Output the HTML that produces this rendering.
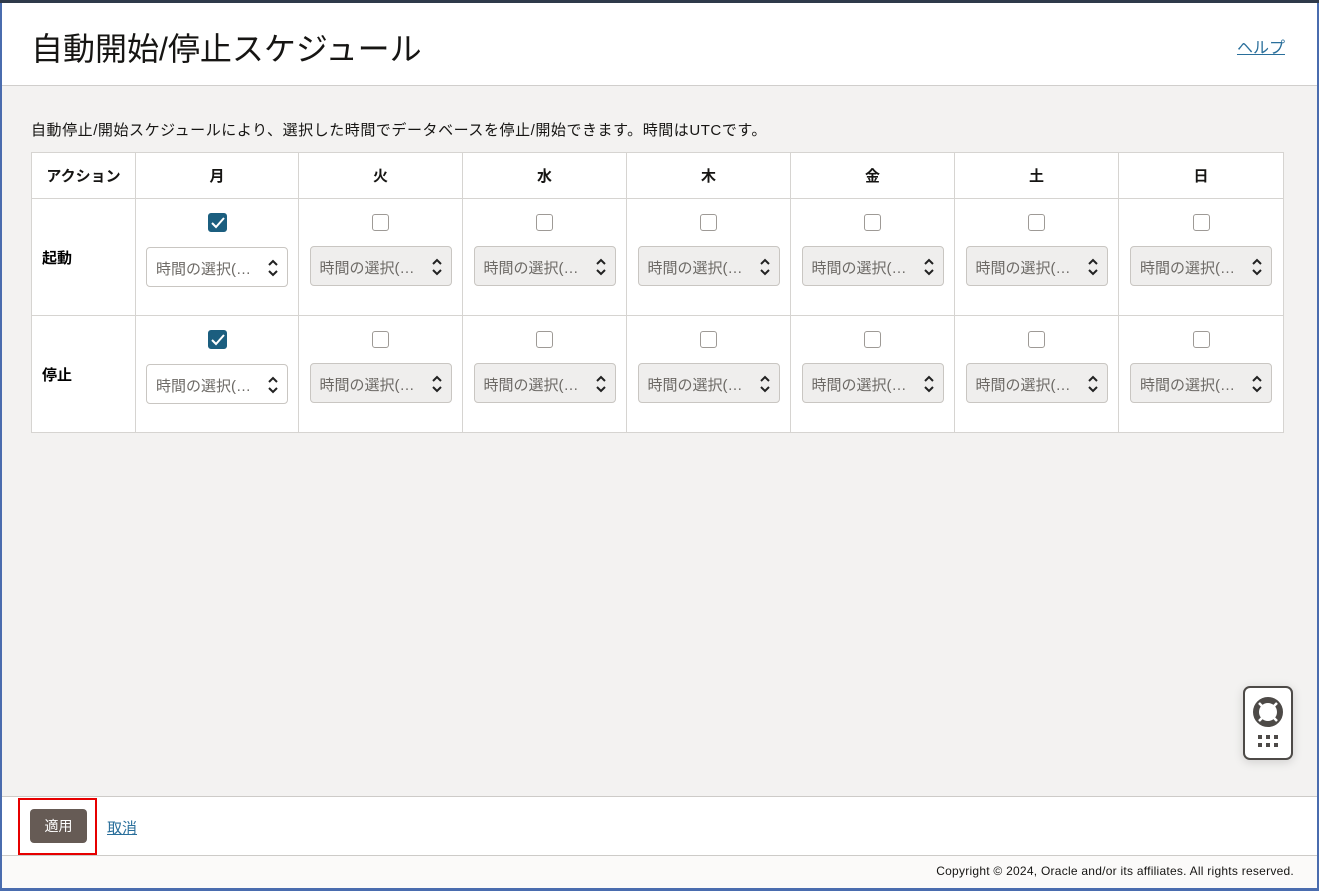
<!DOCTYPE html>
<html><head><meta charset="utf-8"><style>
*{box-sizing:border-box;margin:0;padding:0}
body{width:1319px;height:891px;background:#4a6cae;font-family:"Liberation Sans","Noto Sans CJK JP",sans-serif;position:relative;overflow:hidden}
.frame{position:absolute;left:2px;top:3px;width:1315px;height:885px;background:#fbfaf9}
.topline{position:absolute;left:0;top:0;width:1319px;height:3px;background:#2f3a4a}
.hdr{position:absolute;left:0;top:0;width:1315px;height:83px;background:#fff;border-bottom:1px solid #d0cecc}
.hdr h1{position:absolute;left:29px;top:21px;font-size:32px;font-weight:400;color:#161513}
.help{position:absolute;right:32px;top:31px;font-size:16px;color:#2a6f9b;text-decoration:underline}
.body{position:absolute;left:0;top:83px;width:1315px;height:710px;background:#f3f2f1}
.desc{position:absolute;left:29px;top:33px;font-size:15px;letter-spacing:0.55px;color:#161513}
table{position:absolute;left:29px;top:66px;border-collapse:collapse;background:#fff;border:1px solid #cfcdca}
td,th{border:1px solid #d6d4d1;text-align:center}
th{height:46px;font-size:15px;font-weight:700;color:#161513}
td{height:117px;vertical-align:top}
td.lbl{text-align:left;padding-left:10px;vertical-align:middle;font-weight:700;font-size:15px}
.cb{width:17px;height:17px;border:1px solid #9e9a96;border-radius:3px;margin:15px auto 0;background:#fff}
.cb.on{background:#1b5e7f;border-color:#1b5e7f;width:19px;height:19px;margin-top:14px;position:relative}
.cb.on svg{position:absolute;left:2px;top:3px}
.sel{width:142px;height:40px;margin:15px auto 0;border:1px solid #c9c6c2;border-radius:4px;background:#efeeed;position:relative;font-size:15px;color:#6d6a66;text-align:left;padding:10px 0 0 9px}
.sel.en{background:#fff}
.sel svg{position:absolute;right:9px;top:11px}
.ftr{position:absolute;left:0;top:793px;width:1315px;height:60px;background:#fff;border-top:1px solid #cdcbc8;border-bottom:1px solid #cdcbc8}
.btn{position:absolute;left:28px;top:12px;width:57px;height:34px;background:#665b55;border-radius:4px;color:#fff;font-size:14px;text-align:center;line-height:34px}
.red{position:absolute;left:16px;top:1px;width:79px;height:57px;border:2px solid #e60000}
.cancel{position:absolute;left:105px;top:20px;font-size:15px;color:#2a6f9b;text-decoration:underline}
.copy{position:absolute;right:25px;top:864px;font-size:12px;letter-spacing:0.25px;color:#161513}
.fab{position:absolute;left:1243px;top:686px;width:50px;height:74px;border:2px solid #4d4a47;border-radius:7px;background:#fff;box-shadow:0 2px 10px rgba(0,0,0,.15)}
</style></head><body>
<div class="topline"></div>
<div class="frame">
<div class="hdr"><h1>自動開始/停止スケジュール</h1><span class="help">ヘルプ</span></div>
<div class="body">
<div class="desc">自動停止/開始スケジュールにより、選択した時間でデータベースを停止/開始できます。時間はUTCです。</div>
<table>
<tr><th style="width:104px">アクション</th><th style="width:163px">月</th><th style="width:164px">火</th><th style="width:164px">水</th><th style="width:164px">木</th><th style="width:164px">金</th><th style="width:164px">土</th><th style="width:165px">日</th></tr>
<tr><td class="lbl">起動</td>
<td><div class="cb on"><svg width="14" height="12" viewBox="0 0 14 12"><path d="M1 6l4 4 8-9" stroke="#fff" stroke-width="2" fill="none"/></svg></div><div class="sel en">時間の選択(…<svg width="10" height="18" viewBox="0 0 10 18"><path d="M1 6l4-4 4 4M1 12l4 4 4-4" stroke="#222" stroke-width="2" fill="none"/></svg></div></td>
<td><div class="cb"></div><div class="sel">時間の選択(…<svg width="10" height="18" viewBox="0 0 10 18"><path d="M1 6l4-4 4 4M1 12l4 4 4-4" stroke="#222" stroke-width="2" fill="none"/></svg></div></td>
<td><div class="cb"></div><div class="sel">時間の選択(…<svg width="10" height="18" viewBox="0 0 10 18"><path d="M1 6l4-4 4 4M1 12l4 4 4-4" stroke="#222" stroke-width="2" fill="none"/></svg></div></td>
<td><div class="cb"></div><div class="sel">時間の選択(…<svg width="10" height="18" viewBox="0 0 10 18"><path d="M1 6l4-4 4 4M1 12l4 4 4-4" stroke="#222" stroke-width="2" fill="none"/></svg></div></td>
<td><div class="cb"></div><div class="sel">時間の選択(…<svg width="10" height="18" viewBox="0 0 10 18"><path d="M1 6l4-4 4 4M1 12l4 4 4-4" stroke="#222" stroke-width="2" fill="none"/></svg></div></td>
<td><div class="cb"></div><div class="sel">時間の選択(…<svg width="10" height="18" viewBox="0 0 10 18"><path d="M1 6l4-4 4 4M1 12l4 4 4-4" stroke="#222" stroke-width="2" fill="none"/></svg></div></td>
<td><div class="cb"></div><div class="sel">時間の選択(…<svg width="10" height="18" viewBox="0 0 10 18"><path d="M1 6l4-4 4 4M1 12l4 4 4-4" stroke="#222" stroke-width="2" fill="none"/></svg></div></td>
</tr>
<tr><td class="lbl">停止</td>
<td><div class="cb on"><svg width="14" height="12" viewBox="0 0 14 12"><path d="M1 6l4 4 8-9" stroke="#fff" stroke-width="2" fill="none"/></svg></div><div class="sel en">時間の選択(…<svg width="10" height="18" viewBox="0 0 10 18"><path d="M1 6l4-4 4 4M1 12l4 4 4-4" stroke="#222" stroke-width="2" fill="none"/></svg></div></td>
<td><div class="cb"></div><div class="sel">時間の選択(…<svg width="10" height="18" viewBox="0 0 10 18"><path d="M1 6l4-4 4 4M1 12l4 4 4-4" stroke="#222" stroke-width="2" fill="none"/></svg></div></td>
<td><div class="cb"></div><div class="sel">時間の選択(…<svg width="10" height="18" viewBox="0 0 10 18"><path d="M1 6l4-4 4 4M1 12l4 4 4-4" stroke="#222" stroke-width="2" fill="none"/></svg></div></td>
<td><div class="cb"></div><div class="sel">時間の選択(…<svg width="10" height="18" viewBox="0 0 10 18"><path d="M1 6l4-4 4 4M1 12l4 4 4-4" stroke="#222" stroke-width="2" fill="none"/></svg></div></td>
<td><div class="cb"></div><div class="sel">時間の選択(…<svg width="10" height="18" viewBox="0 0 10 18"><path d="M1 6l4-4 4 4M1 12l4 4 4-4" stroke="#222" stroke-width="2" fill="none"/></svg></div></td>
<td><div class="cb"></div><div class="sel">時間の選択(…<svg width="10" height="18" viewBox="0 0 10 18"><path d="M1 6l4-4 4 4M1 12l4 4 4-4" stroke="#222" stroke-width="2" fill="none"/></svg></div></td>
<td><div class="cb"></div><div class="sel">時間の選択(…<svg width="10" height="18" viewBox="0 0 10 18"><path d="M1 6l4-4 4 4M1 12l4 4 4-4" stroke="#222" stroke-width="2" fill="none"/></svg></div></td>
</tr>
</table>
</div>
<div class="ftr"><div class="red"></div><div class="btn">適用</div><span class="cancel">取消</span></div>
</div>
<div class="fab"><svg width="46" height="70" viewBox="0 0 46 70"><circle cx="23" cy="24" r="12" fill="none" stroke="#4d4a47" stroke-width="6"/><path d="M14 15l4 4M32 15l-4 4M14 33l4-4M32 33l-4-4" stroke="#fff" stroke-width="2.5"/><g fill="#4d4a47"><rect x="13" y="47" width="4" height="4"/><rect x="21" y="47" width="4" height="4"/><rect x="29" y="47" width="4" height="4"/><rect x="13" y="55" width="4" height="4"/><rect x="21" y="55" width="4" height="4"/><rect x="29" y="55" width="4" height="4"/></g></svg></div>
<div class="copy">Copyright © 2024, Oracle and/or its affiliates. All rights reserved.</div>
</body></html>
